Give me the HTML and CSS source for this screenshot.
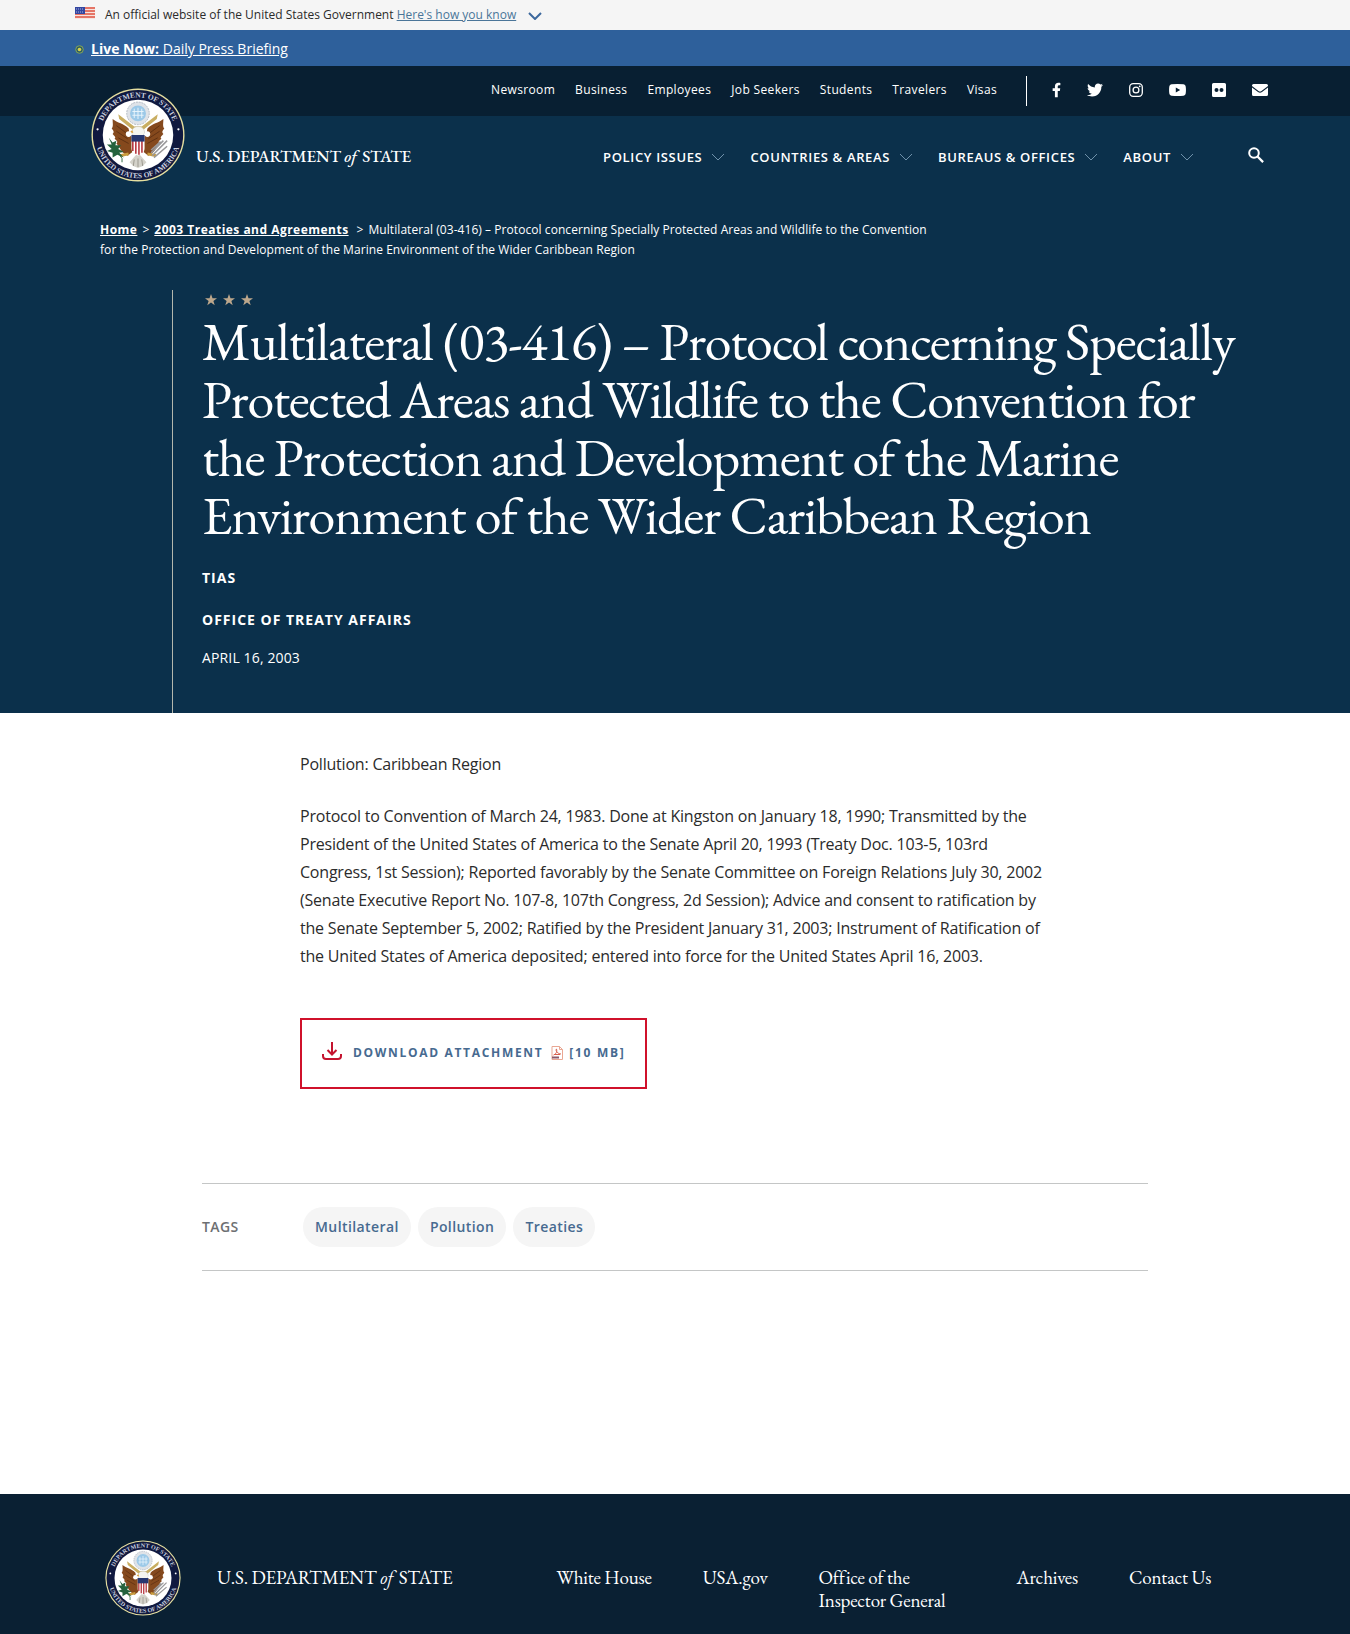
FILE: index.html
```html
<!DOCTYPE html>
<html lang="en">
<head>
<meta charset="utf-8">
<meta name="viewport" content="width=device-width, initial-scale=1">
<title>Multilateral (03-416) - United States Department of State</title>
<link rel="stylesheet" href="styles.css">
</head>
<body>
<svg class="sprite" aria-hidden="true">
  <symbol id="chevron" viewBox="0 0 14 8"><path d="M1 1l6 6 6-6" fill="none" stroke="currentColor"/></symbol>
  <defs>
    <path id="arc-top" d="M10 50a40 40 0 0 1 80 0" fill="none"/>
    <path id="arc-bottom" d="M4.600 44A45.800 45.800 0 1 0 95.400 44" fill="none"/>
  </defs>
  <symbol id="seal" viewBox="0 0 100 100">
    <circle cx="50" cy="50" r="49.5" fill="#e6dfa0"/>
    <circle cx="50" cy="50" r="48" fill="#10193f"/>
    <circle cx="50" cy="50" r="37.5" fill="#fff"/>
    <circle cx="7" cy="44" r="1.200" fill="#fff"/><circle cx="93" cy="44" r="1.200" fill="#fff"/>
    <path d="M29 28l17 13h8l17-13-1 5-15 12h-10l-15-12z" fill="#c9ae62"/>
    <path d="M23 33c5 4 12 5 17 10l1 6 3 3v16l-5 4c-8-4-8-9-12-13 2-1 1-3-2-5 2-1 0-3-2-5 2-2 1-4-1-6 2-2 1-5 1-10z" fill="#85491d"/>
    <path d="M77 33c-5 4-12 5-17 10l-1 6-3 3v16l5 4c8-4 8-9 12-13-2-1-1-3 2-5-2-1 0-3 2-5-2-2-1-4 1-6-2-2-1-5-1-10z" fill="#85491d"/>
    <path d="M27 40l12 9M27 46l12 8M29 53l11 6M73 40l-12 9M73 46l-12 8M71 53l-11 6" stroke="#5e3012" fill="none"/>
    <circle cx="50" cy="27" r="12" fill="#dfe3e8" stroke="#aeb5bf" stroke-dasharray="2 1"/>
    <circle cx="50" cy="27" r="8.500" fill="#9cc9e8"/>
    <path d="M46 22v10M50 21v12M54 22v10M44 25h12M44 29h12" stroke="#eaf5fc" stroke-width="1" fill="none"/>
    <path d="M44 50c-2-5 1-9 6-9s7 3 7 7l-3 4z" fill="#f5f5f0" stroke="#bbb9a8" stroke-width=".500"/>
    <path d="M44 45l-3 2 4 1z" fill="#dca13a"/>
    <circle cx="40" cy="49" r="3" fill="#fff"/><circle cx="60" cy="49" r="3" fill="#fff"/>
    <path d="M40 70l-9 2M60 70l9 2" stroke="#c99c3e" stroke-width="3"/>
    <path d="M50 69l-9 10 4 4 5 2 5-2 4-4z" fill="#d4d2ca"/>
    <path d="M46 76l-1 7M50 75v9M54 76l1 7" stroke="#99958c" fill="none"/>
    <path d="M43 51h14v13c0 5-4 6-7 8-3-2-7-3-7-8z" fill="#fff"/>
    <path d="M44.500 56v11M47.700 56v14M51 56v15M54.200 56v13" stroke="#b22b35" stroke-width="1.600"/>
    <path d="M43 50h14v7h-14z" fill="#273770"/>
    <path d="M19 53l4 5 4-2-1 5 6 0-3 4 6 3-5 1 5 5-7-3-5 3 0-5-6-2 5-2-5-5 5 0z" fill="#24623d"/>
    <path d="M24 61l9 14v4" stroke="#24623d" fill="none"/>
    <path d="M65 72l16-16M64 69l13-13M67 74l14-12M64 66l10-9" stroke="#99989a" stroke-width="1.600"/>
  </symbol>
</svg>

<div class="gov-banner">
  <svg class="flag" viewBox="0 0 20 12" aria-hidden="true">
    <rect width="20" height="12" fill="#f7e3df"/>
    <path d="M0 1h20M0 4h20M0 7h20M0 10h20" stroke="#e0523f" stroke-width="1.500"/>
    <path d="M0 0h10v7H0z" fill="#3346a0"/>
    <path d="M1 2h8M1 5h8" stroke="#a9b1df" stroke-dasharray="1 1"/>
  </svg>
  <p>An official website of the United States Government <a href="#know">Here's how you know</a></p>
  <svg class="chev banner-chev" aria-hidden="true"><use href="#chevron"/></svg>
</div>

<div class="live-banner">
  <svg class="live-dot" viewBox="0 0 9 9" aria-hidden="true"><circle cx="4.500" cy="4.500" r="3.800" fill="#315f62" stroke="#83a45a"/><circle cx="4.500" cy="4.500" r="1.800" fill="#d7d24c"/></svg>
  <a href="#live"><strong>Live Now:</strong> Daily Press Briefing</a>
</div>

<header class="site-header">
  <div class="top-bar">
    <nav class="top-nav" aria-label="Audience">
      <a href="#newsroom">Newsroom</a><a href="#business">Business</a><a href="#employees">Employees</a><a href="#jobs">Job Seekers</a><a href="#students">Students</a><a href="#travelers">Travelers</a><a href="#visas">Visas</a>
    </nav>
    <div class="social">
      <a href="#facebook" aria-label="Facebook"><svg width="9" height="16" viewBox="0 0 320 512"><path d="M279 288l14-93h-89v-60c0-25 13-50 53-50h40V7s-37-7-72-7c-73 0-121 44-121 125v70H23v93h81v224h100V288z"/></svg></a>
      <a href="#twitter" aria-label="Twitter"><svg width="16" height="16" viewBox="0 0 512 512"><path d="M459 152c0 4 0 9 0 14 0 138-105 298-298 298-59 0-114-17-161-47 8 1 16 1 25 1 49 0 94-17 130-45-46-1-85-31-98-73 7 1 13 2 20 2 9 0 19-1 28-4-48-10-84-52-84-103v-1c14 8 30 13 47 13-28-19-46-51-46-87 0-19 5-37 14-53 52 64 129 105 216 110-2-8-3-16-3-24 0-58 47-105 105-105 30 0 57 13 77 33 24-5 46-13 66-25-8 24-24 45-46 58 21-2 42-8 60-16-14 21-32 39-52 54z"/></svg></a>
      <a href="#instagram" aria-label="Instagram"><svg width="14" height="14" viewBox="0 0 14 14"><rect x=".700" y=".700" width="12.600" height="12.600" rx="3.500" fill="none" stroke="currentColor" stroke-width="1.300"/><circle cx="7" cy="7" r="2.900" fill="none" stroke="currentColor" stroke-width="1.300"/><circle cx="10.700" cy="3.300" r=".900"/></svg></a>
      <a href="#youtube" aria-label="YouTube"><svg width="17" height="12" viewBox="0 0 17 12"><path fill-rule="evenodd" d="M2.500.3Q8.500-.3 14.500.3q2 .2 2.200 2.200.5 3.500 0 7-.2 2-2.200 2.200-6 .6-12 0Q.5 11.500.3 9.500-.2 6 .3 2.500.5.500 2.500.3zM6.800 3.500v5L11.200 6z"/></svg></a>
      <a href="#flickr" aria-label="Flickr"><svg width="14" height="14" viewBox="0 0 14 14"><path fill-rule="evenodd" d="M1.500 0h11Q14 0 14 1.500v11q0 1.500-1.500 1.500h-11Q0 14 0 12.500v-11Q0 0 1.500 0zM4.500 5a2 2 0 1 0 0 4 2 2 0 0 0 0-4zM9.500 5a2 2 0 1 0 0 4 2 2 0 0 0 0-4z"/></svg></a>
      <a href="#email" aria-label="Email"><svg width="16" height="12" viewBox="0 0 16 12"><path d="M1.500 0h13Q16 0 16 1.500v.6L9.500 7Q8 8 6.500 7L0 2.100v-.6Q0 0 1.500 0zM0 3.500l6 4.500q2 1.300 4 0l6-4.500v7q0 1.500-1.500 1.500h-13Q0 12 0 10.500z"/></svg></a>
    </div>
  </div>
  <div class="main-bar">
    <a class="brand" href="#home">
      <svg class="seal" viewBox="0 0 100 100"><use href="#seal"/><text><textPath href="#arc-top" startOffset="50%">DEPARTMENT OF STATE</textPath></text><text><textPath href="#arc-bottom" startOffset="50%">UNITED STATES OF AMERICA</textPath></text></svg>
      <span class="wordmark">U.S. DEPARTMENT <i>of</i> STATE</span>
    </a>
    <nav class="main-nav" aria-label="Main">
      <a href="#policy">POLICY ISSUES<svg class="chev"><use href="#chevron"/></svg></a>
      <a href="#countries">COUNTRIES &amp; AREAS<svg class="chev"><use href="#chevron"/></svg></a>
      <a href="#bureaus">BUREAUS &amp; OFFICES<svg class="chev"><use href="#chevron"/></svg></a>
      <a href="#about">ABOUT<svg class="chev"><use href="#chevron"/></svg></a>
    </nav>
    <button class="search" type="button" aria-label="Search"><svg width="16" height="16" viewBox="0 0 16 16"><circle cx="6" cy="6" r="4.800" fill="none" stroke="currentColor" stroke-width="2"/><path d="M9.500 9.500l5.600 5.600" stroke="currentColor" stroke-width="2.300"/></svg></button>
  </div>
</header>

<main>
  <section class="hero">
    <nav class="crumbs" aria-label="Breadcrumb"><a href="#home">Home</a><span class="sep">&gt;</span><a href="#treaties-2003">2003 Treaties and Agreements</a><span class="sep sep-wide">&gt;</span>Multilateral (03-416) – Protocol concerning Specially Protected Areas and Wildlife to the Convention for the Protection and Development of the Marine Environment of the Wider Caribbean Region</nav>
    <div class="headline">
      <svg class="stars" viewBox="0 0 48 12" aria-hidden="true"><g fill="#bda78c"><path id="star" d="M6 0l1.500 4.200H12L8.400 6.900l1.300 4.300L6 8.600l-3.700 2.600 1.300-4.300L0 4.200h4.500z"/><use href="#star" x="18"/><use href="#star" x="36"/></g></svg>
      <h1>Multilateral (03-416) – Protocol concerning Specially Protected Areas and Wildlife to the Convention for the Protection and Development of the Marine Environment of the Wider Caribbean Region</h1>
      <p class="kicker">TIAS</p>
      <p class="kicker office">OFFICE OF TREATY AFFAIRS</p>
      <p class="date">APRIL 16, 2003</p>
    </div>
  </section>

  <article class="entry">
    <p>Pollution: Caribbean Region</p>
    <p>Protocol to Convention of March 24, 1983. Done at Kingston on January 18, 1990; Transmitted by the President of the United States of America to the Senate April 20, 1993 (Treaty Doc. 103-5, 103rd Congress, 1st Session); Reported favorably by the Senate Committee on Foreign Relations July 30, 2002 (Senate Executive Report No. 107-8, 107th Congress, 2d Session); Advice and consent to ratification by the Senate September 5, 2002; Ratified by the President January 31, 2003; Instrument of Ratification of the United States of America deposited; entered into force for the United States April 16, 2003.</p>
    <a class="download" href="#attachment">
      <svg class="dl-icon" viewBox="0 0 20 18" fill="none" stroke="#c4132f" stroke-width="2" aria-hidden="true"><path d="M10 0v12M5.500 8l4.500 4.500L14.500 8M1 12v2q0 3 3 3h12q3 0 3-3v-2"/></svg>
      <span>DOWNLOAD ATTACHMENT</span>
      <svg class="pdf-icon" viewBox="0 0 12 14" fill="none" aria-hidden="true"><path d="M1 .500h7.500l3 3v10H1zM8.500.5v3h3" stroke="#e9a793"/><path d="M2.500 9C6 7.500 6 5 5.500 3c-1.500 1 1 5 4.500 5M3 8.500h6" stroke="#d9604d"/><path d="M1 11.500h7" stroke="#8d5968" stroke-width="2"/></svg>
      <span>[10 MB]</span>
    </a>
  </article>

  <section class="tags">
    <h2>TAGS</h2>
    <ul>
      <li><a href="#multilateral">Multilateral</a></li>
      <li><a href="#pollution">Pollution</a></li>
      <li><a href="#treaties">Treaties</a></li>
    </ul>
  </section>
</main>

<footer class="site-footer">
  <a class="footer-brand" href="#home">
    <svg class="seal" viewBox="0 0 100 100"><use href="#seal"/><text><textPath href="#arc-top" startOffset="50%">DEPARTMENT OF STATE</textPath></text><text><textPath href="#arc-bottom" startOffset="50%">UNITED STATES OF AMERICA</textPath></text></svg>
    <span class="wordmark">U.S. DEPARTMENT <i>of</i> STATE</span>
  </a>
  <nav class="footer-nav" aria-label="Footer">
    <a href="#white-house">White House</a>
    <a href="#usa">USA.gov</a>
    <a class="oig" href="#oig">Office of the<br>Inspector General</a>
    <a href="#archives">Archives</a>
    <a href="#contact">Contact Us</a>
  </nav>
</footer>
</body>
</html>
```
FILE: styles.css
```css
* { box-sizing: border-box; }
body { margin: 0; min-height: 100vh; display: flex; flex-direction: column; background: #fff; color: #2b2b2b; font: 12px/20px "Open Sans", sans-serif; }
main { flex: 1; }
p, h1, h2, ul { margin: 0; padding: 0; }
a { color: inherit; text-decoration: none; }
svg { display: block; flex: none; }
.sprite { position: absolute; width: 0; height: 0; }
.seal text { font: 600 8px "Liberation Serif", serif; text-anchor: middle; fill: #c9cfdf; }
.chev { width: 14px; height: 8px; color: #6f91aa; }

.gov-banner { display: flex; align-items: center; min-height: 30px; padding: 0 75px; background: #f5f5f5; }
.flag { width: 20px; height: 12px; margin: 0 10px 4px 0; }
.gov-banner a { color: #4a7599; text-decoration: underline; }
.banner-chev { margin: 2px 0 0 12px; color: #3c689d; stroke-width: 2; }

.live-banner { display: flex; align-items: center; min-height: 36px; padding: 2px 75px 0; gap: 7px; background: #2e609b; color: #fff; font-size: 14px; }
.live-banner a { text-decoration: underline; }
.live-dot { width: 9px; height: 9px; }

.site-header { background: #0b304b; color: #fff; }
.top-bar { display: flex; justify-content: flex-end; min-height: 50px; padding: 10px 82px 0; background: #081f32; }
.top-nav { display: flex; gap: 20px; padding-top: 4px; letter-spacing: 0.03em; }
.social { display: flex; align-items: center; gap: 26px; height: 30px; margin-left: 29px; padding: 0 0 2px 25px; border-left: 1px solid #fff; }
.social svg { fill: currentColor; }
.main-bar { display: flex; align-items: center; min-height: 80px; padding: 0 86px 0 91px; }
.brand { display: flex; align-items: center; gap: 11px; margin-top: -42px; }
.brand .seal { width: 94px; height: 94px; }
.wordmark { font: 500 17px/24px "EB Garamond", "Liberation Serif", serif; letter-spacing: -0.01em; white-space: nowrap; }
.brand .wordmark { padding-top: 42px; }
.wordmark i { margin-right: 2px; }
.main-nav { display: flex; gap: 25px; margin-left: auto; padding-top: 2px; font-size: 13px; font-weight: 600; letter-spacing: 0.05em; }
.main-nav a { display: flex; align-items: center; gap: 9px; white-space: nowrap; }
.search { margin: 0 0 2px 54px; padding: 0; border: 0; background: none; color: #fff; }

.hero { padding: 24px 100px 0; background: #0b304b; color: #fff; }
.crumbs { max-width: 836px; letter-spacing: 0.005em; }
.crumbs a { font-weight: 700; letter-spacing: 0.04em; text-decoration: underline; }
.sep { margin: 0 5px; }
.sep-wide { margin-left: 8px; }
.headline { margin: 30px 0 0 72px; padding: 4px 0 45px 29px; border-left: 1px solid #b3b7ad; }
.stars { width: 48px; height: 12px; margin-left: 3px; }
h1 { max-width: 1044px; margin-top: 6px; font: 400 54px/58px "EB Garamond", "Liberation Serif", serif; letter-spacing: -0.022em; }
.kicker { margin-top: 24px; font-size: 14px; font-weight: 700; letter-spacing: 1px; }
.office { margin-top: 22px; }
.date { margin-top: 18px; font-size: 14px; letter-spacing: 0.01em; }

.entry { max-width: 1060px; padding: 37px 0 0 300px; font-size: 16px; line-height: 28px; letter-spacing: -0.013em; }
.entry p + p { margin-top: 24px; }
.download { display: inline-flex; align-items: center; height: 71px; margin-top: 48px; padding: 0 20px 2px; border: 2px solid #d0112b; color: #476a90; font-size: 12px; font-weight: 700; letter-spacing: 0.14em; }
.dl-icon { width: 20px; height: 18px; margin: 0 11px 4px 0; }
.pdf-icon { width: 12px; height: 14px; margin: 0 6px 0 8px; }

.tags { display: flex; align-items: center; min-height: 88px; margin: 94px 202px 223px; border: solid #c4c6c6; border-width: 1px 0; font-size: 14px; letter-spacing: 0.03em; }
.tags h2 { width: 101px; color: #6d6f72; font-size: 14px; font-weight: 600; }
.tags ul { display: flex; gap: 7px; list-style: none; }
.tags li a { display: block; padding: 10px 12px; border-radius: 20px; background: #f5f5f5; color: #476a90; font-weight: 600; }

.site-footer { display: flex; align-items: flex-start; min-height: 140px; padding: 46px 105px 0; background: #0a2033; color: #fff; }
.footer-brand { display: flex; align-items: center; gap: 36px; }
.footer-brand .seal { width: 76px; height: 76px; }
.footer-brand .wordmark { font-size: 19px; font-weight: 400; }
.footer-nav { display: flex; flex: 1; gap: 51px; margin: 26px 0 0 104px; font: 19px/23px "EB Garamond", "Liberation Serif", serif; letter-spacing: -0.01em; white-space: nowrap; }
.oig { padding-right: 20px; }
```
